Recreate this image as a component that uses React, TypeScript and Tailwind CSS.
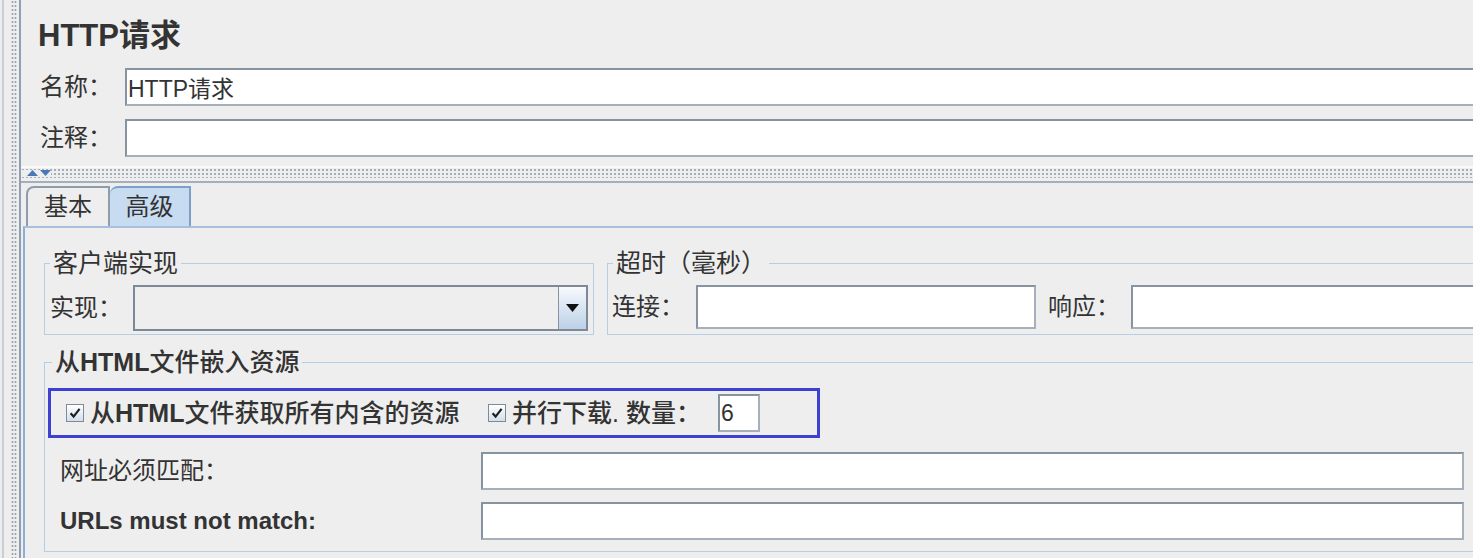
import React from "react";

const font = "font-['Liberation_Sans','Noto_Sans_CJK_SC',sans-serif]";

function Field({
  value = "",
  className = "",
}: {
  value?: string;
  className?: string;
}) {
  return (
    <input
      readOnly
      defaultValue={value}
      className={`min-w-0 bg-white border-2 border-[#a6b0ba] border-t-[#8693a1] border-l-[#8693a1] pl-[1px] text-[23px] text-[#333] outline-none ${className}`}
    />
  );
}

function Check() {
  return (
    <span className="w-[18px] h-[18px] shrink-0 border border-[#7d8b99] bg-linear-to-b from-white to-[#d3dfeb] flex items-center justify-center">
      <svg width="12" height="12" viewBox="0 0 12 12">
        <path d="M1.6 6.2 L4.6 9.6 L10.6 1.8" stroke="#1f1f1f" strokeWidth="2.2" fill="none" />
      </svg>
    </span>
  );
}

export default function App() {
  return (
    <div className={`w-[1473px] h-[558px] overflow-hidden bg-[#eeeeee] flex text-[#333] ${font}`}>
      {/* left splitter strip */}
      <div className="w-[21px] shrink-0 flex">
        <div className="w-[2px]" />
        <div className="w-[2px] bg-[#c9ced4]" />
        <div className="w-[7px]" />
        <div className="w-[6px] bg-[radial-gradient(circle,#98a2ad_0.9px,transparent_1.2px)] [background-size:3px_4px]" />
        <div className="w-[2px]" />
        <div className="w-[2px] bg-[#8f9fb2]" />
      </div>

      <div className="flex-1 min-w-0 flex flex-col">
        {/* header */}
        <div className="pl-[17px] pt-[18px]">
          <h1 className="h-[36px] leading-[36px] text-[31px] font-bold">HTTP请求</h1>
        </div>
        <div className="mt-[14px] pl-[19px] flex flex-col gap-[13px]">
          <div className="flex items-center h-[38px]">
            <span className="w-[85px] text-[24px] leading-none">名称：</span>
            <Field value="HTTP请求" className="flex-1 h-[38px] -mr-[20px]" />
          </div>
          <div className="flex items-center h-[38px]">
            <span className="w-[85px] text-[24px] leading-none">注释：</span>
            <Field className="flex-1 h-[38px] -mr-[20px]" />
          </div>
        </div>

        {/* splitter */}
        <div className="mt-[9px] h-[2px] bg-[#fafafa]" />
        <div className="h-[10px] flex items-center bg-[radial-gradient(circle,#a4aeb8_0.9px,transparent_1.2px)] [background-size:4px_4px]">
          <div className="flex items-center gap-[2px] pl-[6px] bg-[#eeeeee]">
            <svg width="11" height="6" viewBox="0 0 11 6">
              <path d="M0 6 L5.5 0 L11 6 Z" fill="#4a78b4" />
            </svg>
            <svg width="11" height="6" viewBox="0 0 11 6">
              <path d="M0 0 L11 0 L5.5 6 Z" fill="#4a78b4" />
            </svg>
          </div>
        </div>
        <div className="mt-[3px] h-[2px] bg-[#a3afbb]" />

        {/* tabs */}
        <div className="mt-[3px] h-[40px] flex pl-[5px]">
          <div className="w-[84px] h-full border-2 border-b-0 border-[#8e9cac] rounded-tl-[8px] flex items-center justify-center text-[24px]">
            基本
          </div>
          <div className="w-[81px] h-full border-2 border-b-0 border-l-0 border-[#7f9fcb] rounded-tl-[8px] bg-[#c8dcf1] flex items-center justify-center text-[24px]">
            高级
          </div>
        </div>

        {/* tab panel */}
        <div className="flex-1 ml-[2px] border-l-2 border-t-2 border-l-[#8fadd6] border-t-[#a8c0de] pl-[19px] pt-[22px]">
          <div className="flex gap-[13px]">
            <fieldset className="w-[550px] border border-[#b7cde4] px-[5px] pb-[3px]">
              <legend className="px-[3px] text-[25px] leading-[26px]">客户端实现</legend>
              <div className="mt-[9px] flex items-center">
                <span className="w-[83px] text-[24px] leading-none">实现：</span>
                <div className="flex-1 h-[46px] flex border-2 border-[#7d8996] bg-[#eeeeee]">
                  <div className="flex-1" />
                  <div className="w-[28px] border-l border-[#8692a0] bg-linear-to-b from-[#f7fafd] to-[#bcd0e7] flex items-center justify-center">
                    <svg width="13" height="8" viewBox="0 0 13 8">
                      <path d="M0 0 H13 L6.5 8 Z" fill="#111" />
                    </svg>
                  </div>
                </div>
              </div>
            </fieldset>

            <fieldset className="flex-1 -mr-[20px] border border-[#b7cde4] pl-[4px] pb-[5px]">
              <legend className="ml-[1px] px-[3px] text-[25px] leading-[26px]">超时（毫秒）</legend>
              <div className="mt-[9px] flex items-center">
                <span className="w-[84px] text-[24px] leading-none">连接：</span>
                <Field className="w-[340px] h-[44px]" />
                <span className="ml-[12px] w-[83px] text-[24px] leading-none">响应：</span>
                <Field className="flex-1 h-[44px]" />
              </div>
            </fieldset>
          </div>

          <fieldset className="mt-[14px] -mr-[20px] border border-[#b7cde4] pl-[3px] pb-[11px]">
            <legend className="ml-[4px] px-[3px] text-[25px] leading-[26px] font-medium">
              从<span className="font-bold">HTML</span>文件嵌入资源
            </legend>
            <div className="mt-[13px] w-[772px] h-[50px] border-[3px] border-[#3d40d0] flex items-center pl-[15px]">
              <Check />
              <span className="ml-[6px] w-[398px] text-[25px] leading-none font-medium">
                从<span className="font-bold">HTML</span>文件获取所有内含的资源
              </span>
              <Check />
              <span className="ml-[6px] w-[206px] text-[25px] leading-none font-medium">并行下载. 数量：</span>
              <Field value="6" className="w-[42px] h-[38px]" />
            </div>
            <div className="mt-[14px] pl-[12px] flex flex-col gap-[12px]">
              <div className="flex items-center">
                <span className="w-[421px] text-[24px] leading-none">网址必须匹配：</span>
                <Field className="w-[983px] h-[38px]" />
              </div>
              <div className="flex items-center">
                <span className="w-[421px] text-[24px] leading-none font-bold">URLs must not match:</span>
                <Field className="w-[983px] h-[38px]" />
              </div>
            </div>
          </fieldset>
        </div>
      </div>
    </div>
  );
}
